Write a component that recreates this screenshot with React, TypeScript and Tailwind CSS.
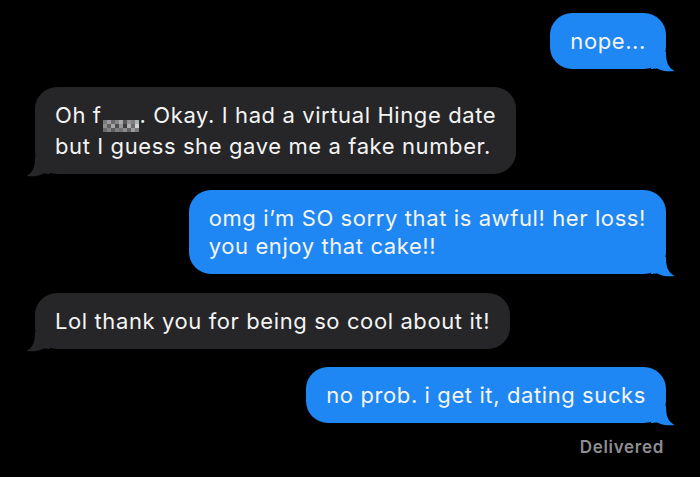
import React from 'react';

type Side = 'me' | 'them';

// iMessage style tail, drawn at the bubble's bottom corner
const Tail: React.FC<{ side: Side }> = ({ side }) => (
  <svg
    width="24"
    height="24"
    viewBox="0 0 24 24"
    className={
      side === 'me'
        ? 'absolute -right-[9px] -bottom-[3px] fill-[#1f87f3]'
        : 'absolute -left-[9px] -bottom-[3px] fill-[#262628] -scale-x-100'
    }
  >
    <path d="M0 4 L15 4 C15 12 16 19 23.5 23 C18 23.8 12 23.4 6 20.5 L0 21 Z" />
  </svg>
);

const Bubble: React.FC<{ side: Side; children: React.ReactNode }> = ({ side, children }) => (
  <div className={side === 'me' ? 'flex justify-end' : 'flex justify-start'}>
    <div
      className={`relative rounded-[22px] px-[20px] py-[14px] text-[22px] leading-[28px] tracking-[0.6px] text-[#f4f4f4] ${
        side === 'me' ? 'bg-[#1f87f3]' : 'bg-[#262628]'
      }`}
    >
      {children}
      <Tail side={side} />
    </div>
  </div>
);

// pixelated censor block
const cells = [
  '#7a7a7c', '#9c9c9e', '#6a6a6c', '#87878a', '#aaaaac', '#5a5a5c', '#939395', '#7f7f81', '#b0b0b2',
  '#8d8d90', '#606062', '#a6a6a8', '#4e4e50', '#959597', '#3e3e40', '#aeaeb0', '#6c6c6e', '#d2d2d4',
  '#69696b', '#818183', '#5e5e60', '#7c7c7e', '#707072', '#8a8a8c', '#616163', '#9a9a9c', '#7a7a7c',
];

const Censor: React.FC = () => (
  <span className="inline-grid grid-cols-[repeat(9,4px)] grid-rows-[repeat(3,4px)] align-[-1px] mx-[1px]">
    {cells.map((c, i) => (
      <span key={i} style={{ backgroundColor: c }} />
    ))}
  </span>
);

export default function App() {
  return (
    <div
      className="w-[700px] h-[477px] bg-black pt-[13px] pl-[35px] pr-[34px] flex flex-col overflow-hidden"
      style={{ fontFamily: 'Inter, "Liberation Sans", sans-serif' }}
    >
      <Bubble side="me">nope...</Bubble>
      <div className="h-[18px]" />
      <Bubble side="them">
        Oh f<Censor />. Okay. I had a virtual Hinge date
        <br />
        but I guess she gave me a fake number.
      </Bubble>
      <div className="h-[16px]" />
      <Bubble side="me">
        omg i’m SO sorry that is awful! her loss!
        <br />
        you enjoy that cake!!
      </Bubble>
      <div className="h-[19px]" />
      <Bubble side="them">Lol thank you for being so cool about it!</Bubble>
      <div className="h-[18px]" />
      <Bubble side="me">no prob. i get it, dating sucks</Bubble>
      <div className="flex justify-end pt-[13px] pr-[2px]">
        <span className="text-[17px] font-semibold tracking-[0.7px] text-[#8d8d92] leading-[22px]">Delivered</span>
      </div>
    </div>
  );
}
